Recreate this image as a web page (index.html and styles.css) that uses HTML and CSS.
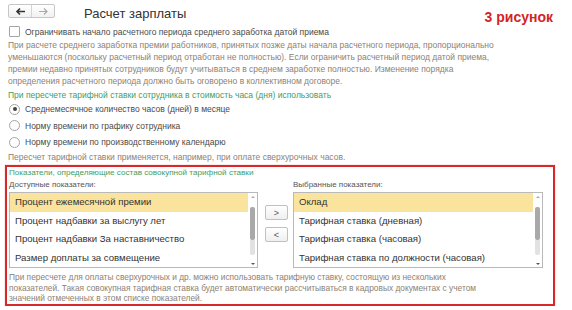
FILE: index.html
```html
<!DOCTYPE html>
<html>
<head>
  <meta charset="UTF-8" />
  <link rel="stylesheet" href="styles.css">
</head>
<body>
  <div class="top">
    <div class="nav">
      <span class="nav-btn">
        <svg width="11" height="9" viewBox="0 0 11 9"><path d="M10 4.5H2.5M5 1.5L2 4.5L5 7.5" fill="none" stroke="#333" stroke-width="1.6"/></svg>
      </span>
      <span class="nav-btn">
        <svg width="11" height="9" viewBox="0 0 11 9"><path d="M1 4.5H8.5M6 1.5L9 4.5L6 7.5" fill="none" stroke="#aaa" stroke-width="1.2"/></svg>
      </span>
    </div>
    <div class="title">Расчет зарплаты</div>
    <div class="mark">3 рисунок</div>
  </div>

  <label class="check-row"><span class="check"></span>Ограничивать начало расчетного периода среднего заработка датой приема</label>

  <p class="hint hint-big">При расчете среднего заработка премии работников, принятых позже даты начала расчетного периода, пропорционально<br>
  уменьшаются (поскольку расчетный период отработан не полностью). Если ограничить расчетный период датой приема,<br>
  премии недавно принятых сотрудников будут учитываться в среднем заработке полностью. Изменение порядка<br>
  определения расчетного периода должно быть оговорено в коллективном договоре.</p>

  <div class="group-title">При пересчете тарифной ставки сотрудника в стоимость часа (дня) использовать</div>
  <div class="radio-row"><span class="radio on"></span>Среднемесячное количество часов (дней) в месяце</div>
  <div class="radio-row"><span class="radio"></span>Норму времени по графику сотрудника</div>
  <div class="radio-row"><span class="radio"></span>Норму времени по производственному календарю</div>

  <p class="hint hint-one">Пересчет тарифной ставки применяется, например, при оплате сверхурочных часов.</p>

  <div class="frame">
    <div class="group-title frame-title">Показатели, определяющие состав совокупной тарифной ставки</div>
    <div class="lists">
      <div class="col">
        <div class="list-label">Доступные показатели:</div>
        <div class="list">
          <div class="items">
            <div class="item sel">Процент ежемесячной премии</div>
            <div class="item">Процент надбавки за выслугу лет</div>
            <div class="item">Процент надбавки За наставничество</div>
            <div class="item">Размер доплаты за совмещение</div>
          </div>
          <div class="scroll">
            <span class="arr up"></span>
            <span class="thumb"></span>
            <span class="track"></span>
            <span class="arr down"></span>
          </div>
        </div>
      </div>
      <div class="moves">
        <button class="move">&gt;</button>
        <button class="move">&lt;</button>
      </div>
      <div class="col">
        <div class="list-label">Выбранные показатели:</div>
        <div class="list">
          <div class="items">
            <div class="item sel">Оклад</div>
            <div class="item">Тарифная ставка (дневная)</div>
            <div class="item">Тарифная ставка (часовая)</div>
            <div class="item">Тарифная ставка по должности (часовая)</div>
          </div>
          <div class="scroll">
            <span class="arr up"></span>
            <span class="thumb"></span>
            <span class="track"></span>
            <span class="arr down"></span>
          </div>
        </div>
      </div>
    </div>
    <p class="hint hint-bottom">При пересчете для оплаты сверхурочных и др. можно использовать тарифную ставку, состоящую из нескольких<br>
    показателей. Такая совокупная тарифная ставка будет автоматически рассчитываться в кадровых документах с учетом<br>
    значений отмеченных в этом списке показателей.</p>
  </div>
</body>
</html>
```

FILE: styles.css
```css
body {
    margin: 0;
    padding: 4px 8px 0 8px;
    background: #fff;
    font-family: "Liberation Sans", Arial, sans-serif;
    font-size: 8.5px;
    color: #4a4a4a;
    overflow: hidden;
}

.top {
    display: flex;
    height: 22px;
}

.nav {
    display: flex;
    height: 14px;
    border: 1px solid #c6c6c6;
    border-radius: 2px;
    background: linear-gradient(#ffffff, #f1f1f1);
    box-sizing: border-box;
}

.nav-btn {
    width: 22px;
    display: flex;
    align-items: center;
    justify-content: center;
}

.nav-btn + .nav-btn {
    border-left: 1px solid #d4d4d4;
}

.title {
    margin-left: 29px;
    margin-top: 2px;
    font-size: 13px;
    line-height: 16px;
    color: #333;
}

.mark {
    margin-left: auto;
    margin-right: 11px;
    margin-top: 5px;
    font-size: 14px;
    line-height: 16px;
    font-weight: bold;
    color: #d42424;
}

.check-row {
    display: flex;
    align-items: center;
    height: 11px;
}

.check {
    width: 9px;
    height: 9px;
    margin-left: 1px;
    margin-right: 5px;
    border: 1px solid #a4a4a4;
    border-radius: 1px;
}

.hint {
    margin: 0;
    color: #8d8275;
    white-space: nowrap;
}

.hint-big {
    margin-top: 2px;
    line-height: 12px;
}

.group-title {
    color: #3f9d62;
    line-height: 12px;
}

.hint-big + .group-title {
    margin-top: 2px;
}

.radio-row {
    display: flex;
    align-items: center;
    height: 16.5px;
}

.radio {
    width: 9px;
    height: 9px;
    margin-left: 1px;
    margin-right: 5px;
    border: 1px solid #a4a4a4;
    border-radius: 50%;
    position: relative;
}

.radio.on::after {
    content: "";
    position: absolute;
    left: 2.5px;
    top: 2.5px;
    width: 4px;
    height: 4px;
    border-radius: 50%;
    background: #444;
}

.hint-one {
    margin-top: 0.5px;
    line-height: 12px;
}

.frame {
    margin: 2px 0 0 -3px;
    width: 550px;
    box-sizing: border-box;
    border: 2px solid #d8282a;
    box-shadow: 0 0 1px #e88;
    padding: 0 10px 0 2px;
}

.frame-title {
    font-size: 8.1px;
}

.lists {
    display: grid;
    grid-template-columns: 249px 35px 1fr;
}

.list-label {
    font-size: 8px;
    line-height: 11px;
    margin-bottom: 2px;
    color: #555;
}

.list {
    display: flex;
    height: 76px;
    border: 1px solid #b9b9b9;
    box-sizing: border-box;
    overflow: hidden;
}

.items {
    flex: 1;
    padding-left: 0;
}

.item {
    height: 18.5px;
    line-height: 18.5px;
    padding-left: 5px;
    color: #333;
    font-size: 9.6px;
    white-space: nowrap;
}

.item.sel {
    background: #fae39d;
}

.scroll {
    width: 9px;
    display: flex;
    flex-direction: column;
    align-items: center;
    padding: 3px 0 2px;
    box-sizing: border-box;
}

.arr {
    width: 0;
    height: 0;
    border-left: 2px solid transparent;
    border-right: 2px solid transparent;
}

.arr.up {
    border-bottom: 2px solid #aaa;
    margin-bottom: 9px;
}

.arr.down {
    border-top: 2px solid #555;
    margin-top: auto;
}

.thumb {
    width: 5px;
    height: 33px;
    border-radius: 2px;
    background: #a9a9a9;
}

.track {
    width: 5px;
    height: 15px;
    border-radius: 0 0 2px 2px;
    background: #e2e2e2;
}

.moves {
    display: flex;
    flex-direction: column;
    align-items: center;
    padding-top: 26px;
    padding-left: 2px;
    gap: 7px;
}

.move {
    width: 23px;
    height: 15px;
    padding: 0;
    border: 1px solid #c0c0c0;
    border-radius: 2px;
    background: linear-gradient(#ffffff, #efefef);
    font-family: "Liberation Sans", Arial, sans-serif;
    font-size: 9px;
    color: #555;
}

.hint-bottom {
    margin-top: 4px;
    font-size: 8.35px;
    line-height: 10.5px;
}
```
